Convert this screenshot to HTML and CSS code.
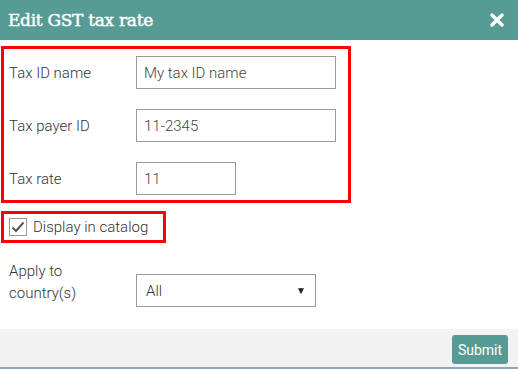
FILE: index.html
```html
<!DOCTYPE html>
<html>
<head>
<meta charset="utf-8">
<link rel="stylesheet" href="styles.css">
</head>
<body>
<div class="dialog">
  <div class="header">
    <span class="title">Edit GST tax rate</span>
    <svg class="close" width="14" height="14" viewBox="0 0 14 14"><path d="M2 2 L12 12 M12 2 L2 12" stroke="#fff" stroke-width="3.4" stroke-linecap="round"/></svg>
  </div>
  <div class="content">
    <div class="hl fields">
      <div class="row"><label class="lbl">Tax ID name</label><div class="input wide">My tax ID name</div></div>
      <div class="row"><label class="lbl">Tax payer ID</label><div class="input wide">11-2345</div></div>
      <div class="row"><label class="lbl">Tax rate</label><div class="input narrow">11</div></div>
    </div>
    <div class="hl check">
      <span class="cb"><svg width="14" height="12" viewBox="0 0 14 12"><path d="M1.5 6.5 L5 10 L12.5 1.5" fill="none" stroke="#555" stroke-width="2"/></svg></span>
      <span class="cblabel">Display in catalog</span>
    </div>
    <div class="row country"><label class="lbl">Apply to<br>country(s)</label><div class="select"><span>All</span><span class="arrow">▼</span></div></div>
  </div>
  <div class="footer"><button class="submit">Submit</button></div>
</div>
</body>
</html>
```
FILE: styles.css
```css
html, body { margin: 0; padding: 0; background: #fff; }
body { font-family: Roboto, "Noto Sans", sans-serif; color: #444; }
.dialog { width: 518px; height: 369px; display: flex; flex-direction: column; }
.header { height: 40px; background: #579c94; display: flex; align-items: center; justify-content: space-between; padding: 0 14px 0 8px; box-sizing: border-box; }
.title { font-family: "DejaVu Serif", serif; color: #fff; font-size: 17px; letter-spacing: -0.3px; -webkit-text-stroke: 0.45px #fff; }
.close { display: block; }
.content { flex: 1; padding: 6px 0 0 1px; }
.hl { border: 3px solid #ff0000; box-sizing: border-box; }
.fields { width: 350px; padding: 7px 0 5px 5px; display: flex; flex-direction: column; gap: 20px; }
.row { display: flex; align-items: center; }
.lbl { width: 127px; font-size: 15px; font-weight: 300; color: #333; line-height: 20px; }
.input { height: 33px; box-sizing: border-box; border: 1px solid #999; padding: 0 7px; display: flex; align-items: center; font-size: 15px; font-weight: 300; color: #444; }
.wide { width: 200px; }
.narrow { width: 100px; }
.check { margin-top: 8px; width: 165px; height: 32px; display: flex; align-items: center; padding-left: 5px; gap: 6px; }
.cb { width: 18px; height: 18px; border: 1px solid #999; box-sizing: border-box; display: flex; align-items: center; justify-content: center; }
.cblabel { font-size: 15px; font-weight: 300; color: #333; }
.country { margin-top: 17px; padding-left: 8px; align-items: flex-start; }
.country .lbl { line-height: 22px; }
.select { width: 180px; height: 33px; box-sizing: border-box; border: 1px solid #999; display: flex; align-items: center; justify-content: space-between; padding: 0 9px 0 9px; font-size: 15px; font-weight: 300; color: #333; margin-top: 14px; }
.arrow { font-size: 10px; color: #222; }
.footer { height: 40px; background: #f2f2f2; border-bottom: 2px solid #8ea5b8; box-sizing: border-box; display: flex; justify-content: flex-end; align-items: flex-start; padding: 6px 10px 0 0; }
.submit { height: 29px; width: 56px; background: #579c94; color: #fff; border: none; border-radius: 3px; font-family: Roboto, sans-serif; font-size: 14px; padding: 0; }
```
